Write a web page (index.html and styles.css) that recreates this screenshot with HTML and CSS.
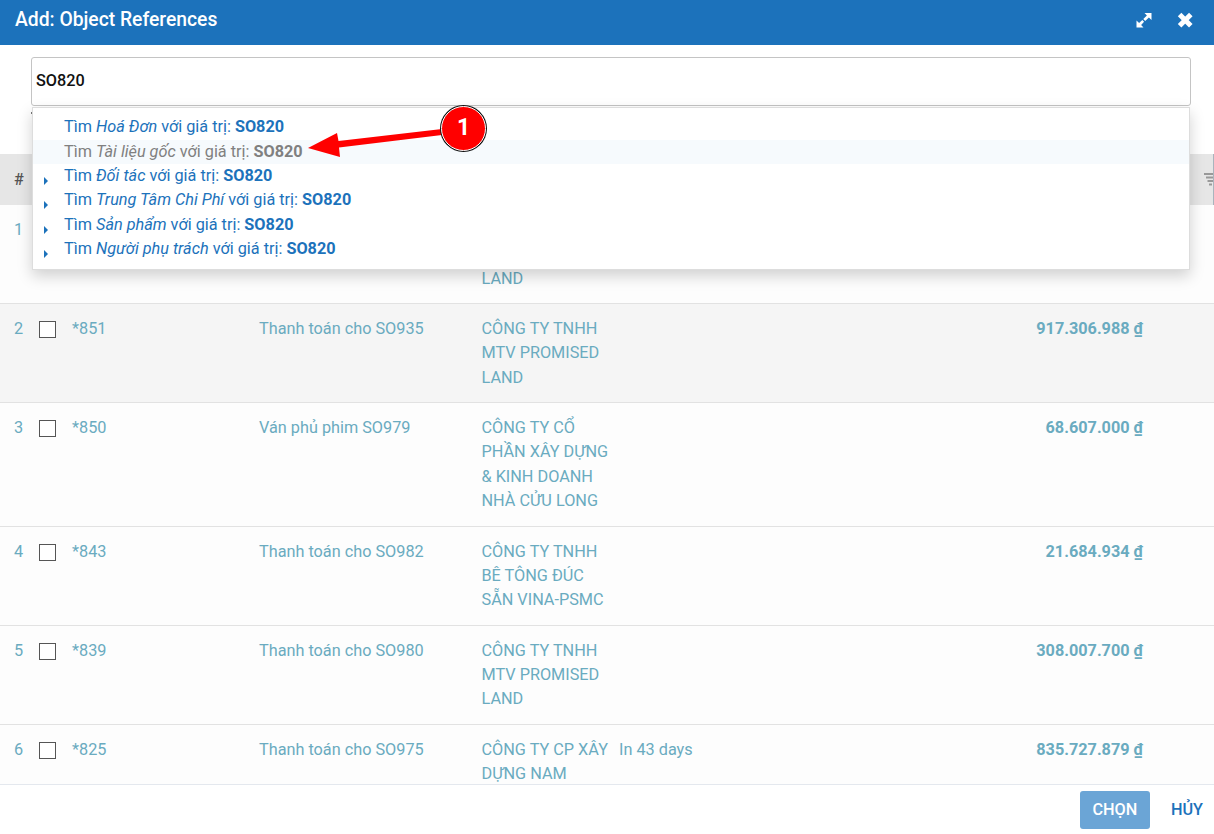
FILE: index.html
```html
<!DOCTYPE html>
<html lang="vi">
	<head>
		<meta charset="UTF-8">
		<title>Add: Object References</title>
		<link rel="stylesheet" href="styles.css">
	</head>
	<body>
		<div class="dialog">
			<header class="dialog-head">
				<h1>Add: Object References</h1>
				<div class="head-icons">
					<svg class="icon-expand" width="16" height="16" viewBox="0 0 16 16"><path d="M8.500 1H15.500V8L12.900 5.400 9.200 9 7.300 7.100 10.900 3.400ZM7.500 15.500H.5V8.500L3.100 11.100 6.300 8 8.100 9.800 5.100 12.900Z"/></svg>
					<svg class="icon-close" width="16" height="16" viewBox="0 0 16 16"><path d="M2.600 2.600 13.800 13.800M13.800 2.600 2.600 13.800"/></svg>
				</div>
			</header>

			<div class="dialog-body">
				<div class="search-box">
					<input class="search-input" type="text" value="SO820">
				</div>

				<div class="table-head">
					<span>#</span>
					<svg class="icon-filter" width="9" height="13" viewBox="0 0 9 13"><path d="M0 0H9V2H0ZM2 3.500H9V5.500H2ZM3.500 7H9V9H3.500ZM5 10.500H8V12.500H5Z"/></svg>
				</div>

				<div class="row">
					<span>1</span>
					<span class="check"></span>
					<span></span>
					<span></span>
					<span class="company">CÔNG TY TNHH MTV PROMISED LAND</span>
				</div>
				<div class="row alt">
					<span>2</span>
					<span class="check"></span>
					<span>*851</span>
					<span>Thanh toán cho SO935</span>
					<span class="company">CÔNG TY TNHH MTV PROMISED LAND</span>
					<span></span>
					<span class="amount">917.306.988 <u>₫</u></span>
				</div>
				<div class="row">
					<span>3</span>
					<span class="check"></span>
					<span>*850</span>
					<span>Ván phủ phim SO979</span>
					<span class="company">CÔNG TY CỔ PHẦN XÂY DỰNG &amp; KINH DOANH NHÀ CỬU LONG</span>
					<span></span>
					<span class="amount">68.607.000 <u>₫</u></span>
				</div>
				<div class="row">
					<span>4</span>
					<span class="check"></span>
					<span>*843</span>
					<span>Thanh toán cho SO982</span>
					<span class="company">CÔNG TY TNHH BÊ TÔNG ĐÚC SẴN VINA-PSMC</span>
					<span></span>
					<span class="amount">21.684.934 <u>₫</u></span>
				</div>
				<div class="row">
					<span>5</span>
					<span class="check"></span>
					<span>*839</span>
					<span>Thanh toán cho SO980</span>
					<span class="company">CÔNG TY TNHH MTV PROMISED LAND</span>
					<span></span>
					<span class="amount">308.007.700 <u>₫</u></span>
				</div>
				<div class="row">
					<span>6</span>
					<span class="check"></span>
					<span>*825</span>
					<span>Thanh toán cho SO975</span>
					<span class="company">CÔNG TY CP XÂY DỰNG NAM</span>
					<span>In 43 days</span>
					<span class="amount">835.727.879 <u>₫</u></span>
				</div>

				<div class="suggest-tick"></div>
				<ul class="suggest">
					<li>Tìm <em>Hoá Đơn</em> với giá trị: <b>SO820</b></li>
					<li class="active">Tìm <em>Tài liệu gốc</em> với giá trị: <b>SO820</b></li>
					<li class="more">Tìm <em>Đối tác</em> với giá trị: <b>SO820</b></li>
					<li class="more">Tìm <em>Trung Tâm Chi Phí</em> với giá trị: <b>SO820</b></li>
					<li class="more">Tìm <em>Sản phẩm</em> với giá trị: <b>SO820</b></li>
					<li class="more">Tìm <em>Người phụ trách</em> với giá trị: <b>SO820</b></li>
				</ul>

				<svg class="callout-arrow" width="140" height="30" viewBox="0 0 140 30"><path d="M136 0 32.500 12 31 4 2 19 34 28 33 18.500 136 6Z"/></svg>
				<div class="callout-badge">1</div>
			</div>

			<footer class="dialog-foot">
				<button class="btn-choose" type="button">CHỌN</button>
				<button class="btn-cancel" type="button">HỦY</button>
			</footer>
		</div>
	</body>
</html>
```

FILE: styles.css
```css
* {
    box-sizing: border-box;
}
body {
    margin: 0;
    background-color: white;
    font-family: Roboto, "Noto Sans", sans-serif;
    font-size: 16.25px;
    line-height: 24.4px;
}
.dialog {
    display: flex;
    flex-direction: column;
    height: 834px;
    overflow: hidden;
}
.dialog-head {
    align-items: center;
    background-color: #1c72bb;
    color: white;
    display: flex;
    flex: none;
    height: 45px;
    justify-content: space-between;
    padding: 0 21px 6px 15px;
}
.dialog-head h1 {
    font-size: 19.3px;
    font-weight: 500;
    margin: 0;
    padding-top: 2px;
}
.head-icons {
    align-items: center;
    display: flex;
    gap: 25px;
}
.icon-expand {
    fill: white;
}
.icon-close {
    fill: none;
    stroke: white;
    stroke-width: 5;
}
.dialog-body {
    flex: 1;
    min-height: 0;
    overflow: hidden;
    position: relative;
}
.search-box {
    height: 109px;
    padding: 12px 23px 0 31px;
}
.search-input {
    border: 1px solid #c4c4c4;
    border-radius: 3px;
    color: #111;
    display: block;
    font-family: inherit;
    font-size: 16.25px;
    font-weight: 500;
    height: 49px;
    padding: 0 4px 2px;
    width: 100%;
}
.table-head {
    align-items: center;
    background-color: #e6e6e6;
    border-right: 1px solid #a9b4bd;
    color: #555;
    display: flex;
    font-weight: 500;
    height: 51px;
    justify-content: space-between;
    padding: 2px 0 0 14px;
}
.icon-filter {
    fill: #999;
    margin-bottom: 3px;
}
.row {
    background-color: #fdfdfd;
    border-bottom: 1px solid #e2e2e2;
    color: #6aabc0;
    display: grid;
    grid-template-columns: 25px 33px 187px 222.5px 137.5px 1fr 220px;
    padding: 12.8px 71px 12.1px 14px;
}
.row.alt {
    background-color: #f5f5f5;
}
.check {
    background-color: white;
    border: 1px solid #555;
    height: 17px;
    margin-top: 4px;
    width: 17px;
}
.company {
    padding-right: 7px;
}
.amount {
    font-weight: 700;
    text-align: right;
}
.suggest-tick {
    background-color: #777;
    height: 2px;
    left: 31px;
    position: absolute;
    top: 67px;
    width: 2px;
}
.suggest {
    background-color: white;
    border: 1px solid #ddd;
    box-shadow: 0 6px 14px rgba(0,0,0,.18);
    color: #1c72bb;
    left: 32px;
    list-style: none;
    margin: 0;
    padding: 7.2px 0 7px;
    position: absolute;
    top: 62px;
    width: 1158px;
}
.suggest li {
    padding-left: 31px;
    position: relative;
}
.suggest li.active {
    background-color: #f6fafd;
    color: #808080;
}
.suggest li.more::before {
    border-bottom: 4px solid transparent;
    border-left: 4px solid #1c72bb;
    border-top: 4px solid transparent;
    content: "";
    left: 11px;
    position: absolute;
    top: 13px;
}
.callout-arrow {
    fill: #f00;
    left: 306px;
    position: absolute;
    top: 84px;
}
.callout-badge {
    align-items: center;
    background-color: #f00;
    border: 1px solid white;
    border-radius: 50%;
    box-shadow: 0 0 0 1px #111;
    color: white;
    display: flex;
    font-size: 23px;
    font-weight: 700;
    height: 45px;
    justify-content: center;
    left: 441px;
    position: absolute;
    top: 61px;
    width: 45px;
}
.dialog-foot {
    align-items: center;
    background-color: white;
    border-top: 1px solid #e4e8ee;
    display: flex;
    flex: none;
    gap: 21px;
    height: 50px;
    justify-content: flex-end;
    padding: 0 11px 0 0;
}
.dialog-foot button {
    border: none;
    cursor: pointer;
    font-family: inherit;
    font-size: 16.25px;
    font-weight: 500;
}
.btn-choose {
    background-color: #6ba5d6;
    border-radius: 3px;
    color: white;
    height: 38px;
    width: 70px;
}
.btn-cancel {
    background: none;
    color: #1c72bb;
    padding: 0;
}
```
